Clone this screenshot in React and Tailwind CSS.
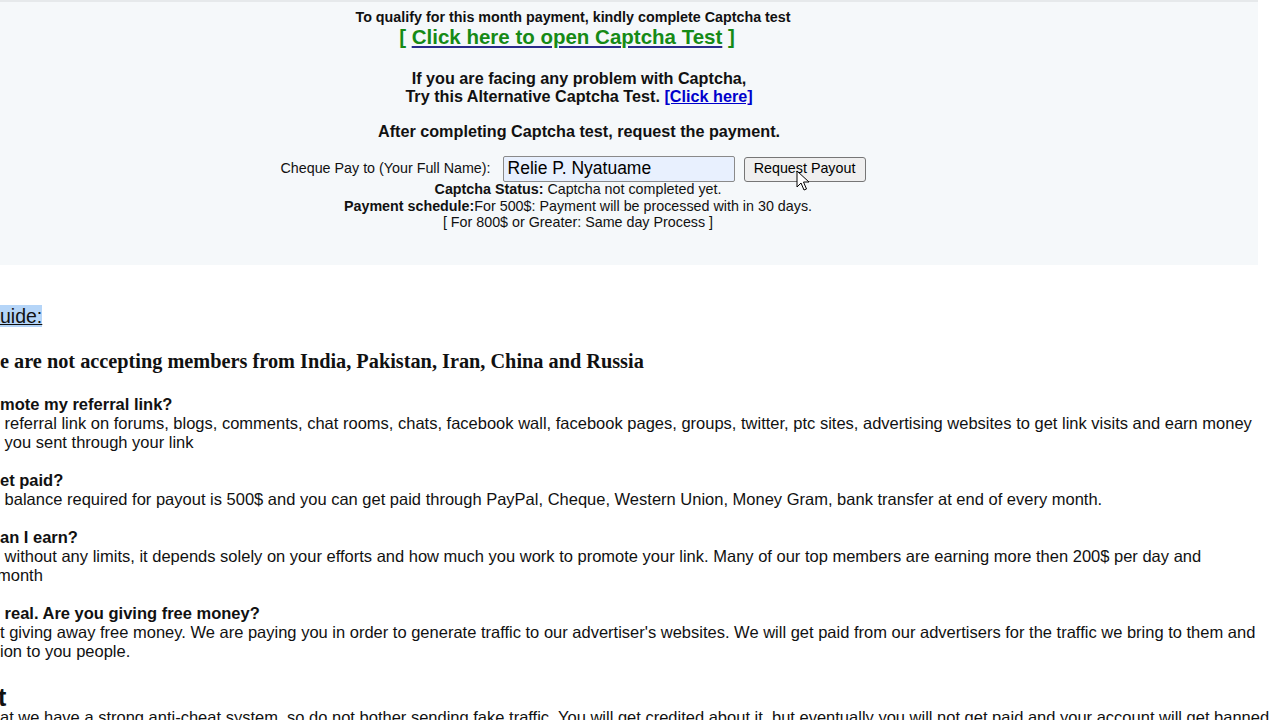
import React from "react";

function Cursor() {
  return (
    <svg className="absolute left-[796px] top-[170px]" width="14" height="22" viewBox="0 0 14 22">
      <path d="M1 1 L1 17 L5 13 L8 20 L10.5 19 L7.5 12 L13 12 Z" fill="#fff" stroke="#000" strokeWidth="1" strokeLinejoin="round" />
    </svg>
  );
}

export default function App() {
  return (
    <div className="relative w-[1280px] h-[720px] overflow-hidden bg-white text-[#111] font-['Liberation_Sans',Arial,sans-serif]">
      <div className="-ml-[108px] w-[1366px] h-[265px] bg-[#f5f8fa] border-t-2 border-[#e6e9eb] flex flex-col items-center pt-[7px]">
        <div className="pr-[4px] text-[14.3px] leading-[16px] font-bold">To qualify for this month payment, kindly complete Captcha test</div>
        <div className="pr-[16px] text-[20.5px] leading-[24px] font-bold text-[#168a16]">
          [ <span className="underline decoration-[#2a2a8a] underline-offset-2">Click here to open Captcha Test</span> ]
        </div>
        <div className="mt-[20px] pl-[8px] text-[16.2px] leading-[18px] font-bold text-center">
          <div>If you are facing any problem with Captcha,</div>
          <div>
            Try this Alternative Captcha Test. <span className="text-[#0000cc] underline">[Click here]</span>
          </div>
        </div>
        <div className="mt-[17px] pl-[8px] text-[16.2px] leading-[18px] font-bold">After completing Captcha test, request the payment.</div>
        <div className="mt-[16px] pr-[4px] flex items-center text-[14.3px]">
          <span className="mr-[12px]">Cheque Pay to (Your Full Name):</span>
          <div className="w-[232px] h-[26px] bg-[#e8f0fe] border border-[#8a8a8a] rounded-[2px] px-[4px] pb-[2px] flex items-center text-[17.5px] leading-[20px] text-black">
            Relie P. Nyatuame
          </div>
          <div className="ml-[9px] w-[122px] h-[25px] bg-[#efefef] border border-[#767676] rounded-[3px] flex items-center justify-center text-[14.3px] text-black">
            Request Payout
          </div>
        </div>
        <div className="-mt-[1px] pl-[6px] text-[14.3px] leading-[16.5px] text-center">
          <div><b>Captcha Status:</b> Captcha not completed yet.</div>
          <div><b>Payment schedule:</b>For 500$: Payment will be processed with in 30 days.</div>
          <div>[ For 800$ or Greater: Same day Process ]</div>
        </div>
      </div>

      <div className="pt-[40px] text-[16.5px] leading-[19px] whitespace-nowrap">
        <div className="text-[19.5px] leading-[23px]">
          <span className="underline bg-[#b5d5f8]">uide:</span>
        </div>
        <div className="mt-[22px] font-['Liberation_Serif','Times_New_Roman',serif] font-bold text-[20.3px] leading-[23px]">
          e are not accepting members from India, Pakistan, Iran, China and Russia
        </div>
        <div className="mt-[22px] font-bold">mote my referral link?</div>
        <div>&nbsp;referral link on forums, blogs, comments, chat rooms, chats, facebook wall, facebook pages, groups, twitter, ptc sites, advertising websites to get link visits and earn money</div>
        <div>&nbsp;you sent through your link</div>

        <div className="mt-[19px] font-bold">et paid?</div>
        <div>&nbsp;balance required for payout is 500$ and you can get paid through PayPal, Cheque, Western Union, Money Gram, bank transfer at end of every month.</div>

        <div className="mt-[19px] font-bold">an I earn?</div>
        <div>&nbsp;without any limits, it depends solely on your efforts and how much you work to promote your link. Many of our top members are earning more then 200$ per day and</div>
        <div className="-ml-[3px]">month</div>

        <div className="mt-[19px] font-bold">&nbsp;real. Are you giving free money?</div>
        <div>t giving away free money. We are paying you in order to generate traffic to our advertiser's websites. We will get paid from our advertisers for the traffic we bring to them and</div>
        <div>ion to you people.</div>

        <div className="mt-[25px] text-[25px] leading-[22px] font-bold -ml-[2px]">t</div>
        <div>at we have a strong anti-cheat system, so do not bother sending fake traffic. You will get credited about it, but eventually you will not get paid and your account will get banned.</div>
      </div>

      <Cursor />
    </div>
  );
}
